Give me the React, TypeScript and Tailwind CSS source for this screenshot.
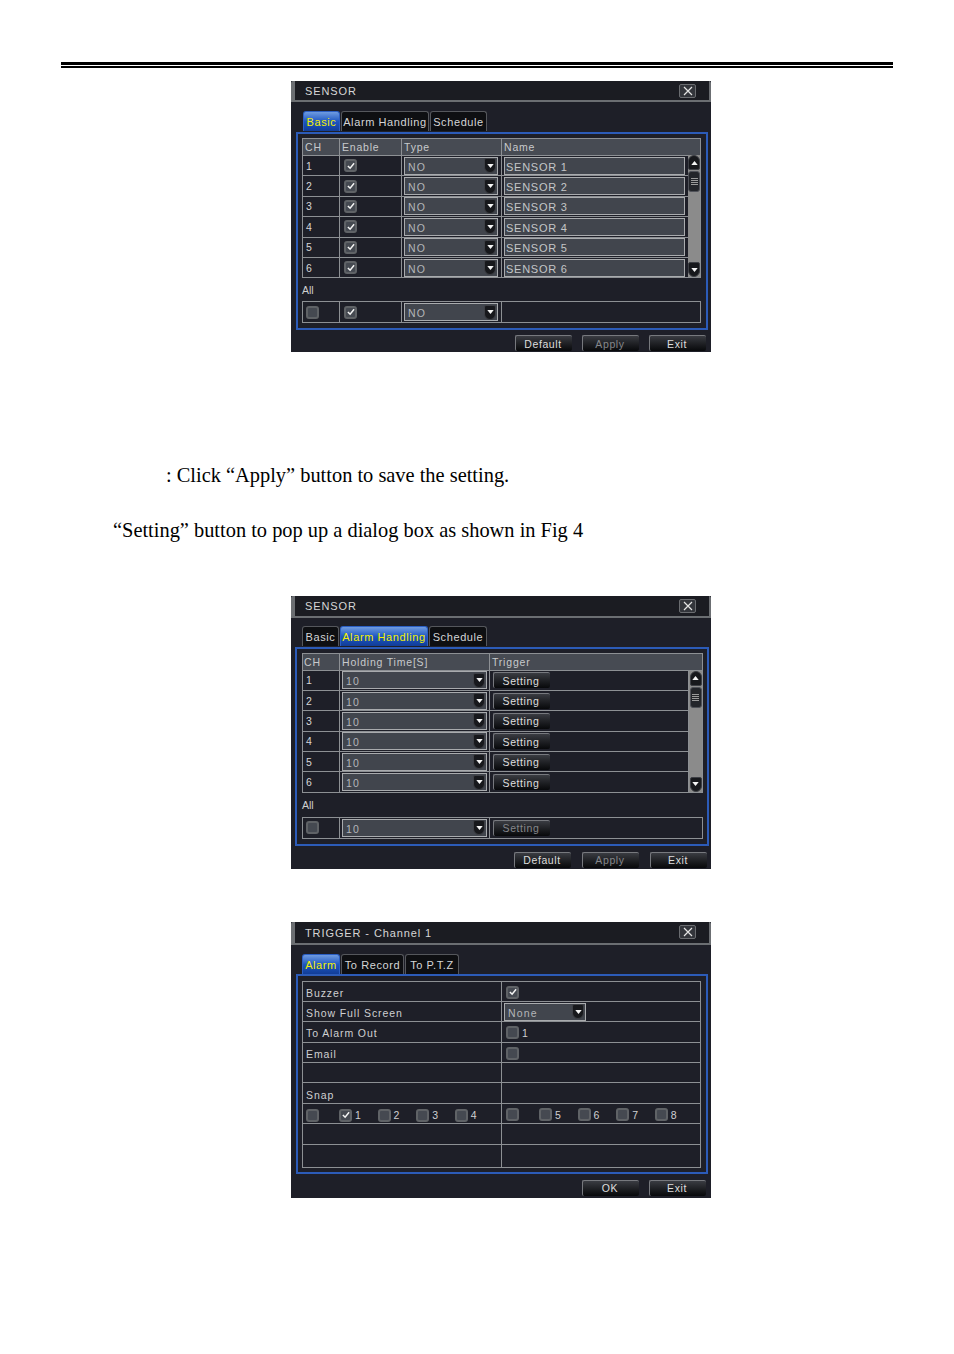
import React from "react";

const osd = "ml-[291px] w-[420px] bg-[#1e1f28] font-['Liberation_Sans',sans-serif] leading-[12px]";

function Check({ on = false }: { on?: boolean }) {
  return (
    <span className="flex h-[13px] w-[13px] shrink-0 items-center justify-center rounded-[3px] border-2 border-[#5f6266] bg-[#454951]">
      {on && (
        <svg width="8" height="8" viewBox="0 0 9 9" fill="none">
          <path d="M1 4.5 L3.5 7 L8 1.5" stroke="#f4f4f4" strokeWidth="1.7" />
        </svg>
      )}
    </span>
  );
}

function Arrow({ dir = "down" }: { dir?: "down" | "up" }) {
  return (
    <span
      className={`flex h-[15px] w-[12px] shrink-0 items-center justify-center border border-[#3d3f45] bg-[#17181c] ${
        dir === "down" ? "rounded-b-[6px] rounded-t-[2px]" : "rounded-t-[6px] rounded-b-[2px]"
      }`}
    >
      <svg width="7" height="4" viewBox="0 0 8 5">
        <path d={dir === "down" ? "M0 0 H8 L4 5 Z" : "M0 5 H8 L4 0 Z"} fill="#f4f4f4" />
      </svg>
    </span>
  );
}

function Select({ text, w }: { text: string; w: string }) {
  return (
    <span className={`flex h-[18px] items-center justify-between border border-[#a9abae] bg-[#41454d] pl-[3px] pr-[1px] ${w}`}>
      <span className="pt-[2px] text-[10.5px] tracking-[1.2px] text-[#b4b6b9]">{text}</span>
      <Arrow />
    </span>
  );
}

function Btn({ label, dim = false, w = "w-[57px]" }: { label: string; dim?: boolean; w?: string }) {
  return (
    <span
      className={`flex h-[16px] ${w} items-center justify-center rounded-[2px] border-l border-t border-[#77797e] border-b-[#303137] bg-gradient-to-b from-[#3a3c42] to-[#08090b] pr-[2px] text-[10.5px] tracking-[0.6px] ${
        dim ? "text-[#85878b]" : "text-[#dedede]"
      }`}
    >
      {label}
    </span>
  );
}

function Tabs({ tabs, cls }: { tabs: { label: string; w: string; active?: boolean }[]; cls: string }) {
  return (
    <div className={`flex h-[20px] gap-[1px] ${cls}`}>
      {tabs.map((t) => (
        <span
          key={t.label}
          className={`flex ${t.w} items-center justify-center rounded-t-[3px] border-x border-t text-[11px] tracking-[0.6px] ${
            t.active
              ? "border-[#2b5fc4] bg-gradient-to-b from-[#6f9be0] via-[#1e56c0] to-[#113d98] text-[#f4f000]"
              : "border-[#55575c] bg-[#0e0f12] text-[#d4d5d6]"
          }`}
        >
          {t.label}
        </span>
      ))}
    </div>
  );
}

function Title({ text, h, textPad = "" }: { text: string; h: string; textPad?: string }) {
  return (
    <div className={`flex ${h} items-center justify-between rounded-t-[2px] border-b-2 border-l-[4px] border-r-[2px] border-[#6b6e72] bg-[#1b1c22] pl-[10px] pr-[13px]`}>
      <span className={`text-[11px] tracking-[0.9px] text-[#d6d6d6] ${textPad}`}>{text}</span>
      <span className="flex h-[14px] w-[17px] items-center justify-center rounded-[2px] border border-[#6a6c70] bg-[#33353b]">
        <svg width="10" height="10" viewBox="0 0 10 10" fill="none">
          <path d="M1 1 L9 9 M9 1 L1 9" stroke="#e4e4e4" strokeWidth="1.2" />
        </svg>
      </span>
    </div>
  );
}

function Thumbbar() {
  return (
    <div className="flex w-[13px] flex-col items-center justify-between bg-[#8b8b8b]">
      <div className="flex w-full flex-col items-center">
        <Arrow dir="up" />
        <span className="mt-[1px] flex h-[21px] w-[12px] flex-col items-center justify-center gap-[1px] rounded-[3px] border border-[#505259] bg-[#23252a]">
          <i className="h-px w-[7px] bg-[#9a9a9a]" />
          <i className="h-px w-[7px] bg-[#9a9a9a]" />
          <i className="h-px w-[7px] bg-[#9a9a9a]" />
          <i className="h-px w-[7px] bg-[#9a9a9a]" />
        </span>
      </div>
      <Arrow />
    </div>
  );
}

const rows = [1, 2, 3, 4, 5, 6];
const headText = "bg-[#474b53] text-[10.5px] tracking-[0.8px] text-[#c8cacc]";

function SensorDialog() {
  return (
    <section className={`mt-[13.5px] h-[271px] ${osd}`}>
      <Title text="SENSOR" h="h-[21px]" textPad="pt-[1px]" />
      <div className="mt-[9px]">
        <Tabs
          cls="ml-[12px] pb-0"
          tabs={[
            { label: "Basic", w: "w-[37px] pt-[1px]", active: true },
            { label: "Alarm Handling", w: "w-[88px] pt-[1px]" },
            { label: "Schedule", w: "w-[57px] pt-[1px]" },
          ]}
        />
      </div>
      <div className="ml-[5px] mt-[1px] h-[198px] w-[412px] border-2 border-[#2c5bb8] pl-[4px] pt-[4px]">
        <div className="w-[399px] border border-[#8d9094]">
          <div className={`grid h-[16px] grid-cols-[37px_62px_100px_198px] items-stretch ${headText}`}>
            <span className="flex items-center border-r border-[#8d9094] pl-[2px]">CH</span>
            <span className="flex items-center border-r border-[#8d9094] pl-[2px]">Enable</span>
            <span className="flex items-center border-r border-[#8d9094] pl-[2px]">Type</span>
            <span className="flex items-center pl-[2px]">Name</span>
          </div>
          <div className="flex">
            <div className="w-[385px]">
              {rows.map((n) => (
                <div key={n} className="grid h-[20.4px] grid-cols-[37px_62px_100px_186px] border-t border-[#8d9094] text-[10.5px] text-[#d6d6d6]">
                  <span className="flex items-center border-r border-[#8d9094] pl-[3px]">{n}</span>
                  <span className="flex items-center border-r border-[#8d9094] pl-[4px]"><Check on /></span>
                  <span className="flex items-center border-r border-[#8d9094] pl-[2px]"><Select text="NO" w="w-[94px]" /></span>
                  <span className="flex items-center pl-[2px]">
                    <span className="flex h-[18px] w-[181px] items-center border border-[#a9abae] bg-[#41454d] pl-[1px] pt-[2px] text-[11px] tracking-[0.75px] text-[#c4c6c8]">SENSOR {n}</span>
                  </span>
                </div>
              ))}
            </div>
            <Thumbbar />
          </div>
        </div>
        <div className="mt-[4px] h-[17px] text-[10.5px] leading-[17px] text-[#d0d0d0]">All</div>
        <div className="mt-[2px] grid h-[22px] w-[399px] grid-cols-[37px_62px_100px_198px] border border-[#8d9094]">
          <span className="flex items-center border-r border-[#8d9094] pl-[3px]"><Check /></span>
          <span className="flex items-center border-r border-[#8d9094] pl-[4px]"><Check on /></span>
          <span className="flex items-center border-r border-[#8d9094] pl-[2px]"><Select text="NO" w="w-[94px]" /></span>
          <span />
        </div>
      </div>
      <div className="mt-[5px] flex justify-end gap-[10px] pr-[5px]">
        <Btn label="Default" />
        <Btn label="Apply" dim />
        <Btn label="Exit" />
      </div>
    </section>
  );
}

function AlarmDialog() {
  return (
    <section className={`h-[273px] ${osd}`}>
      <Title text="SENSOR" h="h-[22px]" />
      <div className="mt-[8px]">
        <Tabs
          cls="ml-[11px]"
          tabs={[
            { label: "Basic", w: "w-[37px] pt-[1px]" },
            { label: "Alarm Handling", w: "w-[88px] pt-[1px]", active: true },
            { label: "Schedule", w: "w-[58px] pt-[1px]" },
          ]}
        />
      </div>
      <div className="ml-[4px] mt-[1px] h-[199px] w-[414px] border-2 border-[#2c5bb8] pl-[5px] pt-[4px]">
        <div className="w-[401px] border border-[#8d9094]">
          <div className={`grid h-[16px] grid-cols-[37px_150px_212px] ${headText}`}>
            <span className="flex items-center border-r border-[#8d9094] pl-[1px]">CH</span>
            <span className="flex items-center border-r border-[#8d9094] pl-[2px]">Holding Time[S]</span>
            <span className="flex items-center pl-[2px]">Trigger</span>
          </div>
          <div className="flex">
            <div className="w-[385px]">
              {rows.map((n) => (
                <div key={n} className="grid h-[20.4px] grid-cols-[37px_150px_198px] border-t border-[#8d9094] text-[10.5px] text-[#d6d6d6]">
                  <span className="flex items-center border-r border-[#8d9094] pl-[3px]">{n}</span>
                  <span className="flex items-center border-r border-[#8d9094] pl-[2px]"><Select text="10" w="w-[145px]" /></span>
                  <span className="flex items-center pl-[3px]"><Btn label="Setting" /></span>
                </div>
              ))}
            </div>
            <div className="flex border-l border-t border-[#8d9094]"><Thumbbar /></div>
          </div>
        </div>
        <div className="mt-[4px] h-[17px] text-[10.5px] leading-[17px] text-[#d0d0d0]">All</div>
        <div className="mt-[3px] grid h-[22px] w-[401px] grid-cols-[37px_150px_212px] border border-[#8d9094]">
          <span className="flex items-center border-r border-[#8d9094] pl-[3px]"><Check /></span>
          <span className="flex items-center border-r border-[#8d9094] pl-[2px]"><Select text="10" w="w-[145px]" /></span>
          <span className="flex items-center pl-[3px]"><Btn label="Setting" dim /></span>
        </div>
      </div>
      <div className="mt-[6px] flex justify-end gap-[11px] pr-[4px]">
        <Btn label="Default" />
        <Btn label="Apply" dim />
        <Btn label="Exit" />
      </div>
    </section>
  );
}

function NumCheck({ n, on = false }: { n: number; on?: boolean }) {
  return (
    <span className="flex w-[38.6px] items-center gap-[3px]">
      <Check on={on} />
      <span>{n}</span>
    </span>
  );
}

function TriggerRow({ left, right, h = "h-[20.4px]" }: { left?: React.ReactNode; right?: React.ReactNode; h?: string }) {
  return (
    <div className={`grid ${h} grid-cols-[199px_198px] border-b border-[#8d9094] text-[10.5px] tracking-[0.9px] text-[#cfd0d2] last:border-b-0`}>
      <span className="flex items-center border-r border-[#8d9094] pl-[3px] pt-[3px]">{left}</span>
      <span className="flex items-center pl-[4px] pt-[2px]">{right}</span>
    </div>
  );
}

function TriggerDialog() {
  return (
    <section className={`mt-[53px] h-[276px] ${osd}`}>
      <Title text="TRIGGER - Channel 1" h="h-[23px]" textPad="pt-[1px]" />
      <div className="mt-[9px]">
        <Tabs
          cls="ml-[11px]"
          tabs={[
            { label: "Alarm", w: "w-[38px] pt-[1px]", active: true },
            { label: "To Record", w: "w-[63px] pt-[1px]" },
            { label: "To P.T.Z", w: "w-[54px] pt-[1px]" },
          ]}
        />
      </div>
      <div className="ml-[5px] h-[200px] w-[412px] border-2 border-[#2c5bb8] pl-[4px] pt-[5px]">
        <div className="w-[399px] border border-[#8d9094]">
          <TriggerRow left="Buzzer" right={<Check on />} />
          <TriggerRow left="Show Full Screen" right={<span className="-ml-[2px] -mt-[2px]"><Select text="None" w="w-[82px]" /></span>} />
          <TriggerRow left="To Alarm Out" right={<span className="flex items-center gap-[3px]"><Check /><span>1</span></span>} />
          <TriggerRow left="Email" right={<Check />} />
          <TriggerRow />
          <TriggerRow left="Snap" />
          <TriggerRow
            left={
              <span className="flex items-center">
                <span className="w-[33px]"><Check /></span>
                <NumCheck n={1} on />
                <NumCheck n={2} />
                <NumCheck n={3} />
                <NumCheck n={4} />
              </span>
            }
            right={
              <span className="flex items-center">
                <span className="w-[33px]"><Check /></span>
                <NumCheck n={5} />
                <NumCheck n={6} />
                <NumCheck n={7} />
                <NumCheck n={8} />
              </span>
            }
          />
          <TriggerRow />
          <TriggerRow h="h-[22px]" />
        </div>
      </div>
      <div className="mt-[6px] flex justify-end gap-[10px] pr-[5px]">
        <Btn label="OK" />
        <Btn label="Exit" />
      </div>
    </section>
  );
}

export default function App() {
  return (
    <div className="h-[1354px] w-[954px] overflow-hidden bg-white pt-[62px] font-['Liberation_Serif',serif] text-[20.4px] leading-[23px] text-black">
      <div className="mx-[61px]">
        <div className="h-[3px] bg-black" />
        <div className="mt-[1px] h-[1.5px] bg-black" />
      </div>
      <SensorDialog />
      <p className="ml-[166px] mt-[111.5px]">: Click “Apply” button to save the setting.</p>
      <p className="ml-[113px] mb-[54px] mt-[32px]">“Setting” button to pop up a dialog box as shown in Fig 4</p>
      <AlarmDialog />
      <TriggerDialog />
    </div>
  );
}
